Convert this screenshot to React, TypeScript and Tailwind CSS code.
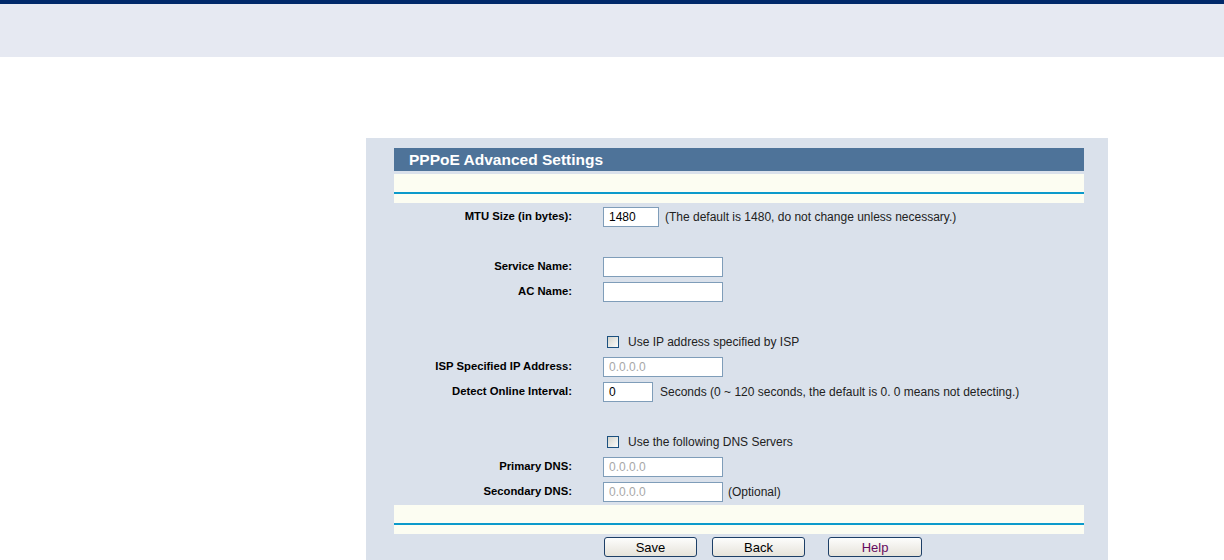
import React from "react";

const font = { fontFamily: '"Liberation Sans", Arial, sans-serif' };

function Label({ children }: { children?: React.ReactNode }) {
  return (
    <div className="w-[178px] shrink-0 text-right text-[11.3px] font-bold text-black leading-none">
      {children}
    </div>
  );
}

function TextBox({ w, value, disabled }: { w: string; value?: string; disabled?: boolean }) {
  return (
    <div
      className={`${w} h-[20px] shrink-0 border border-[#7f9db9] bg-white pl-[5px] flex items-center text-[12px] leading-none ${
        disabled ? "text-[#a8a8a8]" : "text-black"
      }`}
    >
      {value}
    </div>
  );
}

function Check({ text }: { text: string }) {
  return (
    <div className="flex items-center pl-[4px]">
      <span className="w-[12px] h-[12px] border border-[#1c5180] bg-gradient-to-br from-[#d4d4cc] to-[#fcfcfb] shrink-0" />
      <span className="ml-[9px] text-[12px] text-[#222] leading-none">{text}</span>
    </div>
  );
}

function Row({ label, children }: { label?: string; children?: React.ReactNode }) {
  return (
    <div className="h-[25px] flex items-center">
      <Label>{label}</Label>
      <div className="ml-[31px] flex items-center">{children}</div>
    </div>
  );
}

function Cream() {
  return (
    <div className="h-[29px] bg-[#fcfdf2] pt-[18px]">
      <div className="h-[2px] bg-[#0b9acb]" />
    </div>
  );
}

function Btn({ text, cls, color }: { text: string; cls: string; color?: string }) {
  return (
    <div
      className={`${cls} w-[93px] h-[20px] border border-[#1d3f67] rounded-[3px] bg-gradient-to-b from-[#fdfdfc] to-[#e6e3da] flex items-center justify-center text-[13px] leading-none ${
        color ?? "text-black"
      }`}
    >
      {text}
    </div>
  );
}

export default function App() {
  return (
    <div className="w-[1224px] h-[560px] overflow-hidden bg-white" style={font}>
      <div className="border-t-[4px] border-[#00286a] h-[57px] bg-[#e6e9f2]" />
      <div className="pt-[81px] pl-[366px]">
        <div className="w-[742px] h-[440px] bg-[#dae1eb] pt-[10px] pl-[28px] pr-[24px]">
          <div className="h-[23px] bg-[#4e7399] flex items-center pl-[15px] text-white font-bold text-[15.5px] leading-none">
            PPPoE Advanced Settings
          </div>
          <div className="mt-[3px]">
            <Cream />
          </div>
          <div className="mt-[1px]">
            <Row label="MTU Size (in bytes):">
              <TextBox w="w-[56px]" value="1480" />
              <span className="ml-[6px] text-[12px] text-[#222] leading-none">
                (The default is 1480, do not change unless necessary.)
              </span>
            </Row>
            <Row />
            <Row label="Service Name:">
              <TextBox w="w-[120px]" />
            </Row>
            <Row label="AC Name:">
              <TextBox w="w-[120px]" />
            </Row>
            <Row />
            <Row>
              <Check text="Use IP address specified by ISP" />
            </Row>
            <Row label="ISP Specified IP Address:">
              <TextBox w="w-[120px]" value="0.0.0.0" disabled />
            </Row>
            <Row label="Detect Online Interval:">
              <TextBox w="w-[50px]" value="0" />
              <span className="ml-[7px] text-[12px] text-[#222] leading-none">
                Seconds (0 ~ 120 seconds, the default is 0. 0 means not detecting.)
              </span>
            </Row>
            <Row />
            <Row>
              <Check text="Use the following DNS Servers" />
            </Row>
            <Row label="Primary DNS:">
              <TextBox w="w-[120px]" value="0.0.0.0" disabled />
            </Row>
            <Row label="Secondary DNS:">
              <TextBox w="w-[120px]" value="0.0.0.0" disabled />
              <span className="ml-[5px] text-[12px] text-[#222] leading-none">(Optional)</span>
            </Row>
          </div>
          <div className="mt-[1px]">
            <Cream />
          </div>
          <div className="mt-[3px] flex">
            <Btn text="Save" cls="ml-[210px]" />
            <Btn text="Back" cls="ml-[15px]" />
            <Btn text="Help" cls="ml-[23px] w-[94px]" color="text-[#650a5e]" />
          </div>
        </div>
      </div>
    </div>
  );
}
